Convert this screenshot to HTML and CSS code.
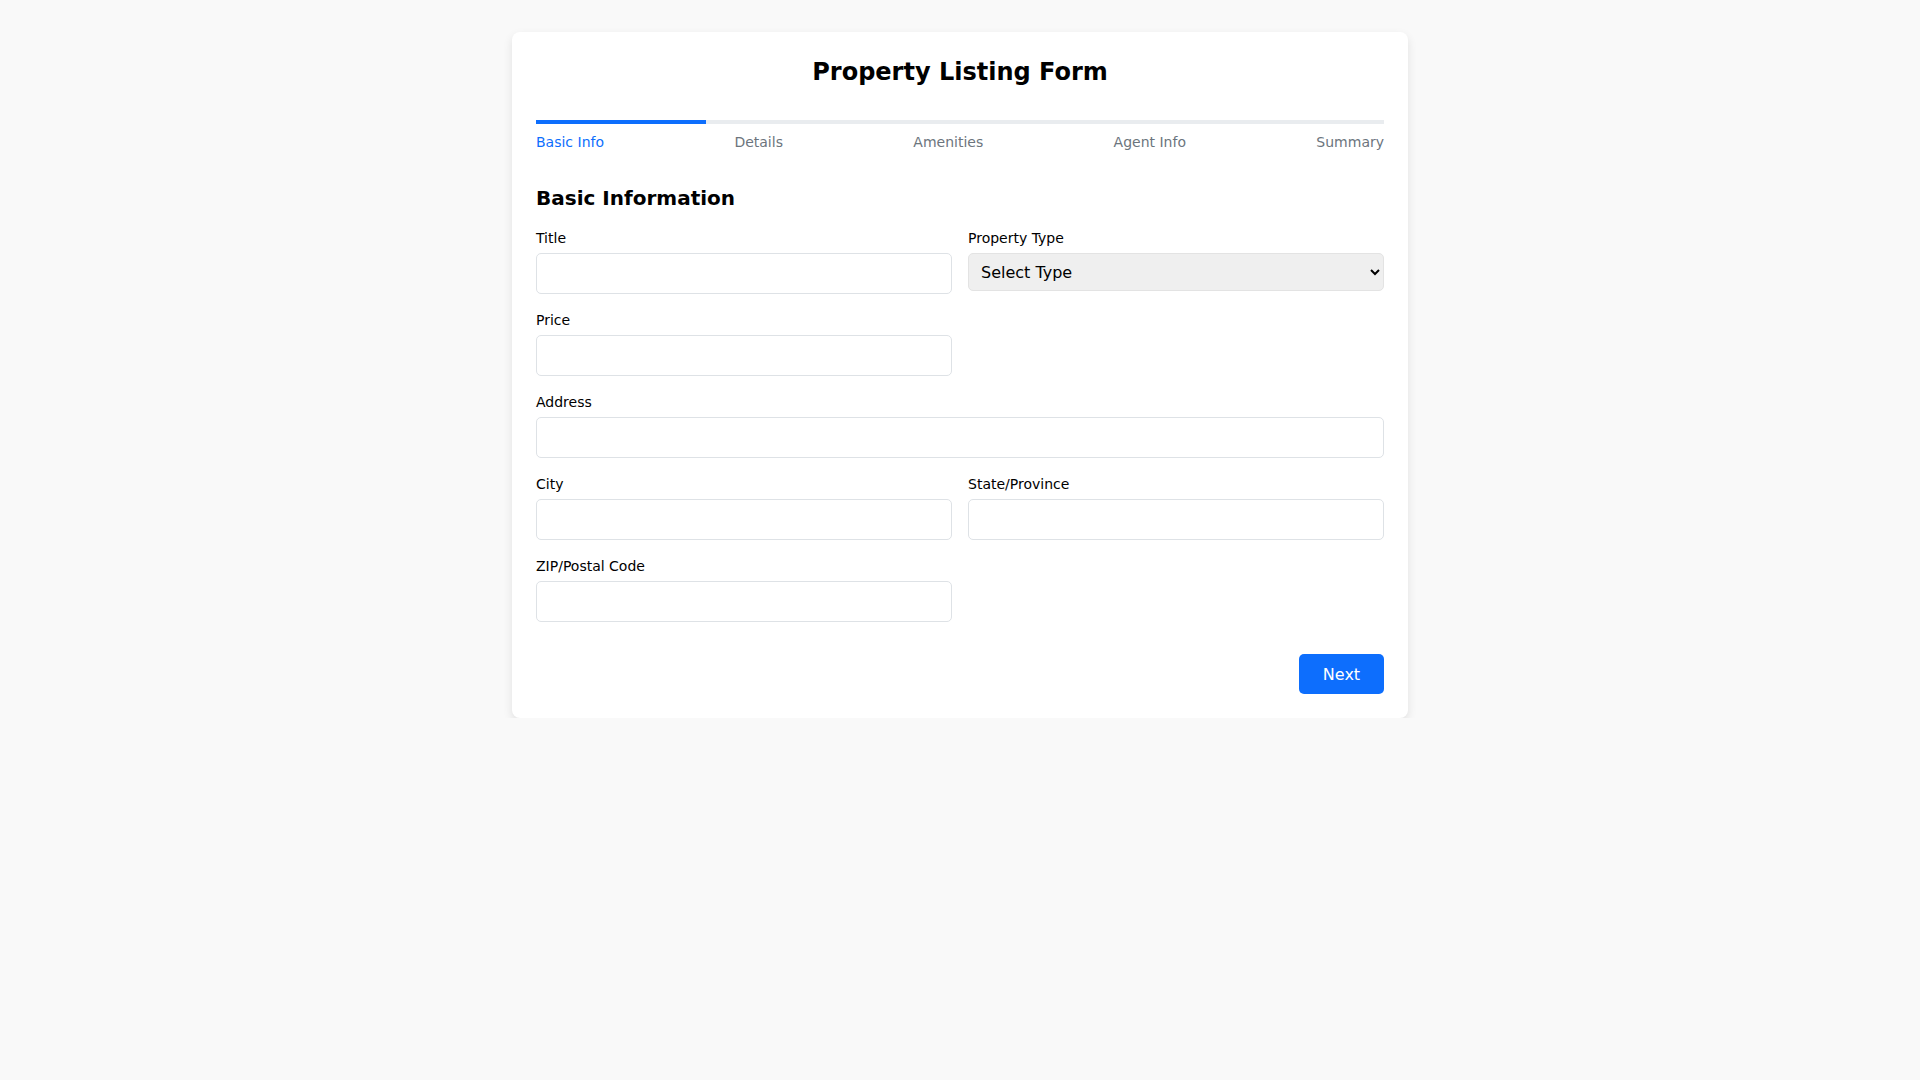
FILE: index.html
```html
<!DOCTYPE html>
<html lang="en">
<head>
<meta charset="utf-8">
<title>Property Listing Form</title>
<link rel="stylesheet" href="styles.css">
</head>
<body>
<div class="card">
  <h1 class="form-title">Property Listing Form</h1>
  <div class="progress"><div class="progress-fill" style="width: 20%"></div></div>
  <div class="steps">
    <span class="step active">Basic Info</span>
    <span class="step">Details</span>
    <span class="step">Amenities</span>
    <span class="step">Agent Info</span>
    <span class="step">Summary</span>
  </div>
  <h2 class="section-title">Basic Information</h2>
  <div class="grid">
    <div class="field">
      <label class="label">Title</label>
      <input class="input" type="text">
    </div>
    <div class="field">
      <label class="label">Property Type</label>
      <select class="select"><option>Select Type</option></select>
    </div>
    <div class="field">
      <label class="label">Price</label>
      <input class="input" type="text">
    </div>
    <div class="field"></div>
    <div class="field full">
      <label class="label">Address</label>
      <input class="input" type="text">
    </div>
    <div class="field">
      <label class="label">City</label>
      <input class="input" type="text">
    </div>
    <div class="field">
      <label class="label">State/Province</label>
      <input class="input" type="text">
    </div>
    <div class="field">
      <label class="label">ZIP/Postal Code</label>
      <input class="input" type="text">
    </div>
  </div>
  <div class="actions">
    <button class="btn" type="button">Next</button>
  </div>
</div>
</body>
</html>
```

FILE: styles.css
```css
html, body {
  margin: 0;
  padding: 0;
}
body {
  background: #f9f9f9;
  font-family: "DejaVu Sans", sans-serif;
  color: #000;
  padding-top: 32px;
}
.card {
  width: 896px;
  box-sizing: border-box;
  margin: 0 auto;
  background: #fff;
  border-radius: 8px;
  box-shadow: 0 4px 10px rgba(0, 0, 0, 0.1);
  padding: 24px;
}
.form-title {
  margin: 0;
  text-align: center;
  font-size: 24px;
  line-height: 32px;
  font-weight: bold;
}
.progress {
  margin-top: 32px;
  height: 4px;
  background: #e9ecef;
}
.progress-fill {
  height: 100%;
  background: #0d6efd;
}
.steps {
  display: flex;
  justify-content: space-between;
  margin-top: 8px;
  font-size: 14px;
  line-height: 20px;
  color: #6c757d;
}
.step.active {
  color: #0d6efd;
}
.section-title {
  margin: 32px 0 0;
  font-size: 20px;
  line-height: 28px;
  font-weight: bold;
}
.grid {
  margin-top: 16px;
  display: grid;
  grid-template-columns: 1fr 1fr;
  column-gap: 16px;
}
.field {
  display: flex;
  flex-direction: column;
  margin-bottom: 16px;
}
.field.full {
  grid-column: 1 / -1;
}
.label {
  font-size: 14px;
  line-height: 21px;
  margin-bottom: 4px;
  font-weight: normal;
}
.input {
  height: 41px;
  box-sizing: border-box;
  border: 1px solid #dee2e6;
  border-radius: 5px;
  font-family: inherit;
  font-size: 16px;
  padding: 8px 12px;
  background: #fff;
}
.select {
  height: 38px;
  box-sizing: border-box;
  border: 1px solid #e3e3e3;
  border-radius: 5px;
  background-color: #efefef;
  font-family: inherit;
  font-size: 16px;
  padding: 0 8px;
  color: #000;
}
.actions {
  display: flex;
  justify-content: flex-end;
  margin-top: 16px;
}
.btn {
  width: 85px;
  height: 40px;
  background: #0d6efd;
  color: #fff;
  border: none;
  border-radius: 5px;
  font-family: inherit;
  font-size: 16px;
}
```
